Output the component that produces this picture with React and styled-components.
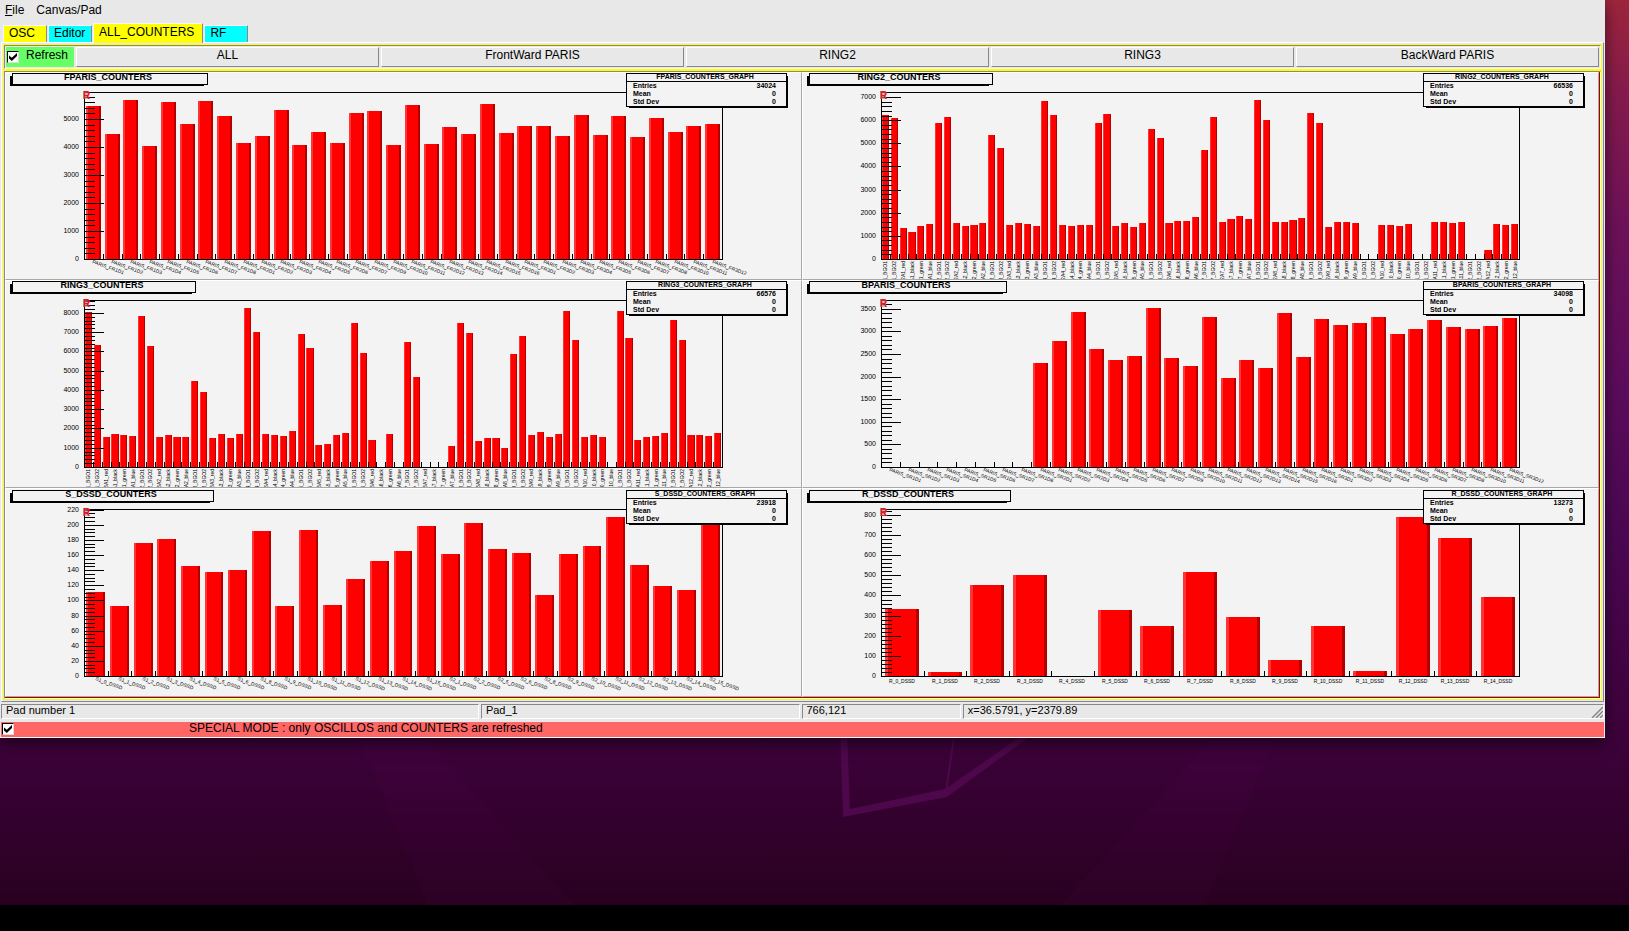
import * as React from "react";
import styled, { createGlobalStyle } from "styled-components";

const GlobalStyles = createGlobalStyle`
  * {
    box-sizing: border-box;
  }
  body {
    margin: 0;
    background: #000;
    font-family: "Liberation Sans", Arial, sans-serif;
    font-size: 12px;
    line-height: 14px;
    color: #000;
  }
`;

const Desktop = styled.div`
  position: relative;
  min-height: 100vh;
  padding-right: 24px;
  overflow: hidden;
`;

const WallpaperSvg = styled.svg`
  position: absolute;
  top: 0;
  left: 0;
  width: 100%;
  height: calc(100% - 26px);
`;

const Window = styled.div`
  position: relative;
  background: #e8e8e8;
  border-bottom: 1px solid #f8f8f8;
  box-shadow: 0 5px 14px rgba(0, 0, 0, 0.55);
`;

const MenuBar = styled.nav`
  display: flex;
  gap: 12px;
  height: 22px;
  padding: 3px 5px 0;
`;

const MenuItem = styled.button`
  align-self: flex-start;
  padding: 0;
  border: 0;
  background: none;
  font: inherit;
  color: inherit;

  &::first-letter {
    text-decoration: ${(props) => (props.$hotkey ? "underline" : "none")};
  }
`;

const TabStrip = styled.div`
  display: flex;
  align-items: flex-end;
  gap: 1px;
  height: 20px;
  padding-left: 3px;
`;

const Tab = styled.button`
  position: relative;
  min-width: 44px;
  height: ${(props) => (props.$active ? 20 : 17)}px;
  margin-bottom: ${(props) => (props.$active ? -1 : 0)}px;
  padding: 0 ${(props) => (props.$active ? 8 : 2)}px 3px 5px;
  border: 1px solid #f8f8f8;
  border-right-color: #888;
  border-bottom: 0;
  background: ${(props) => props.$color};
  font: inherit;
  color: inherit;
  text-align: left;
`;

const TabFrame = styled.div`
  margin: 0 1px;
  padding: 1px;
  border: 1px solid #fff;
  border-right-color: #888;
  border-bottom-color: #888;
`;

const YellowFrame = styled.div`
  display: flex;
  flex-direction: column;
  gap: 2px;
  padding: 1px;
  background: #ff0;
`;

const Sunken = styled.div`
  border: 1px solid #888;
  border-right-color: #fff;
  border-bottom-color: #fff;
  background: #e8e8e8;
`;

const Toolbar = styled(Sunken)`
  display: flex;
  gap: 2px;
  padding: 1px;
`;

const RefreshLabel = styled.label`
  display: flex;
  gap: 7px;
  width: 68px;
  height: 20px;
  padding: 0 1px;
  background: #6f6;
  line-height: 16px;
`;

const CheckBox = styled.input`
  appearance: none;
  flex: none;
  width: 12px;
  height: 12px;
  margin: ${(props) => props.$top}px 0 0;
  border: 1px solid #888;
  border-top-color: #000;
  border-left-color: #000;
  border-right-color: #ddd;
  border-bottom-color: #ddd;
  background: #fff;

  &:checked::before {
    content: "";
    display: block;
    width: 8px;
    height: 8px;
    margin: 1px;
    background: #000;
    clip-path: polygon(0 30%, 35% 60%, 100% 0, 100% 38%, 35% 100%, 0 70%);
  }
`;

const ToolButton = styled.button`
  flex: 1;
  height: 20px;
  padding: 0 0 4px;
  border: 1px solid #fff;
  border-right-color: #888;
  border-bottom-color: #888;
  background: #e8e8e8;
  font: inherit;
  color: inherit;
`;

const PadGrid = styled.div`
  display: grid;
  grid-template-columns: 1fr 1fr;
  border: 0 solid #a00;
  border-width: 0 1px 1px 0;
  background: #f3f3f3;
`;

const Pad = styled.section`
  min-width: 0;
  border: 1px solid #fff;
  border-right-color: #a8a8a8;
  border-bottom-color: #a8a8a8;

  &:nth-child(n + 5) {
    padding-top: 1px;
  }
`;

const Plot = styled.svg`
  display: block;
  width: 100%;
  height: auto;
`;

const PlotTitle = styled.text`
  font-size: 9px;
  font-weight: bold;
  text-anchor: middle;
`;

const StatText = styled.text`
  font-size: 7px;
  font-weight: bold;
  text-anchor: ${(props) => props.$anchor || "start"};
`;

const AxisText = styled.text`
  font-size: 7px;
  text-anchor: end;
`;

const BinText = styled.text`
  font-size: 5px;
  text-anchor: ${(props) => props.$anchor};
`;

const RangeMark = styled.text`
  font-size: 10px;
  font-weight: bold;
  fill: #f01020;
`;

const StatusBar = styled.footer`
  display: grid;
  grid-template-columns: 120fr 80fr 40fr 161fr;
  gap: 2px;
  padding: 2px 1px 3px;
`;

const StatusCell = styled(Sunken)`
  display: flex;
  justify-content: space-between;
  height: 15px;
  padding-left: 4px;
  font-size: 11px;
  line-height: 11px;
`;

const ModeLabel = styled.label`
  display: flex;
  gap: 175px;
  height: 15px;
  margin: 0 1px;
  padding-left: 1px;
  background: #f66;
  line-height: 12px;
`;

const LEFT = 78;
const RIGHT = 716;
const TOP = 19;
const BASE = 186;

const range = (from, to) =>
  Array.from({ length: to - from + 1 }, (_, i) => from + i);

const parisBins = (side) => [
  ...range(1, 8).map((d) => `PARIS_${side}R1D${d}`),
  ...[...range(1, 7), ...range(9, 16)].map((d) => `PARIS_${side}R2D${d}`),
  ...[...range(1, 8), ...range(10, 12)].map((d) => `PARIS_${side}R3D${d}`),
];

const ringBins = (ring) =>
  range(1, 12).flatMap((a) =>
    ["BGO1", "BGO2", "red", "black", "green", "blue"].map(
      (part) => `R${ring}A${a}_${part}`
    )
  );

const plots = [
  {
    name: "FPARIS_COUNTERS",
    entries: 34024,
    titleRight: 202,
    scale: 0.028,
    major: 1000,
    minor: 200,
    labels: "slanted",
    bins: parisBins("F"),
    values: [
      5460, 4460, 5680, 4040, 5610, 4820, 5640, 5110, 4140, 4390, 5320, 4070,
      4540, 4140, 5210, 5290, 4070, 5500, 4110, 4710, 4460, 5540, 4500, 4750,
      4750, 4390, 5140, 4430, 5110, 4360, 5040, 4540, 4750, 4820,
    ],
  },
  {
    name: "RING2_COUNTERS",
    entries: 66536,
    titleRight: 190,
    scale: 0.02314,
    major: 1000,
    minor: 200,
    labels: "vertical",
    bins: ringBins(2),
    values: [
      6210, 6100, 1340, 1170, 1430, 1510, 5880, 6140, 1560, 1430, 1470, 1560,
      5360, 4800, 1470, 1560, 1510, 1430, 6830, 6230, 1470, 1430, 1470, 1470,
      5880, 6270, 1430, 1560, 1380, 1560, 5620, 5230, 1560, 1640, 1640, 1820,
      4710, 6140, 1600, 1730, 1860, 1730, 6870, 6010, 1600, 1600, 1690, 1770,
      6310, 5880, 1380, 1600, 1600, 1560, 0, 0, 1470, 1470, 1430, 1510, 0, 0,
      1600, 1600, 1560, 1600, 0, 0, 390, 1510, 1470, 1510,
    ],
  },
  {
    name: "RING3_COUNTERS",
    entries: 66576,
    titleRight: 190,
    scale: 0.01927,
    major: 1000,
    minor: 200,
    labels: "vertical",
    bins: ringBins(3),
    values: [
      8060, 6350, 1570, 1730, 1680, 1630, 7850, 6300, 1570, 1680, 1570, 1570,
      4480, 3910, 1520, 1730, 1520, 1730, 8270, 7020, 1730, 1680, 1630, 1890,
      6920, 6190, 1160, 1210, 1680, 1780, 7490, 5930, 1420, 0, 1730, 0, 6500,
      4690, 0, 0, 0, 1110, 7490, 6970, 1370, 1520, 1520, 1000, 5880, 6820,
      1680, 1830, 1570, 1730, 8110, 6610, 1570, 1680, 1570, 0, 8110, 6710,
      1420, 1570, 1630, 1780, 7650, 6610, 1680, 1680, 1630, 1780,
    ],
  },
  {
    name: "BPARIS_COUNTERS",
    entries: 34098,
    titleRight: 204,
    scale: 0.0452,
    major: 500,
    minor: 100,
    labels: "slanted",
    bins: parisBins("S"),
    values: [
      0, 0, 0, 0, 0, 0, 0, 0, 2310, 2795, 3435, 2620, 2375, 2465, 3525, 2420,
      2240, 3325, 1975, 2375, 2200, 3415, 2440, 3280, 3150, 3190, 3325, 2950,
      3060, 3260, 3105, 3060, 3125, 3305,
    ],
  },
  {
    name: "S_DSSD_COUNTERS",
    entries: 23918,
    titleRight: 208,
    scale: 0.756,
    major: 20,
    minor: 5,
    labels: "slanted",
    bins: [
      ...[...range(0, 6), ...range(8, 15)].map((d) => `S1_${d}_DSSD`),
      ...[1, 2, 5, 6, ...range(8, 15)].map((d) => `S2_${d}_DSSD`),
    ],
    values: [
      111, 93, 176, 181, 146, 138, 140, 192, 92, 193, 94, 128, 152, 166, 199,
      162, 203, 168, 163, 107, 162, 172, 210, 147, 119, 114, 205,
    ],
  },
  {
    name: "R_DSSD_COUNTERS",
    entries: 13273,
    titleRight: 208,
    scale: 0.2013,
    major: 100,
    minor: 20,
    labels: "flat",
    bins: range(0, 14).map((d) => `R_${d}_DSSD`),
    values: [
      334, 21, 453, 503, 0, 329, 250, 518, 295, 81, 250, 26, 791, 687, 394,
    ],
  },
];

function BinLabel({ kind, x, children }) {
  if (kind === "vertical") {
    return (
      <BinText $anchor="end" transform={`translate(${x + 2} 188) rotate(-90)`}>
        {children}
      </BinText>
    );
  }
  if (kind === "slanted") {
    return (
      <BinText $anchor="start" transform={`translate(${x - 1} 190) rotate(20)`}>
        {children}
      </BinText>
    );
  }
  return (
    <BinText $anchor="middle" x={x} y={193}>
      {children}
    </BinText>
  );
}

function Histogram({ plot }) {
  const { name, values, bins, scale, major, minor } = plot;
  const step = (RIGHT - LEFT) / values.length;
  const ticks = range(0, Math.floor((BASE - TOP) / scale / minor)).map(
    (i) => i * minor
  );

  return (
    <Plot viewBox="0 0 795 206" role="img" aria-label={name}>
      <path
        d={`M${LEFT + 0.5} ${BASE + 0.5}V${TOP + 0.5}H${RIGHT + 0.5}V${BASE + 0.5}`}
        fill="none"
        stroke="#000"
      />
      <g shapeRendering="crispEdges">
        {values.map((value, i) => {
          if (!value) return null;
          const x = Math.round(LEFT + step * (i + 0.1));
          const width = Math.round(LEFT + step * (i + 0.9)) - x;
          const height = Math.round(value * scale);
          const bevel = Math.max(1, Math.round(width * 0.1));
          return (
            <g key={i}>
              <rect x={x} y={BASE - height} width={width} height={height} fill="#f00" />
              <rect x={x} y={BASE - height} width={bevel} height={height} fill="#ff3434" />
              <rect x={x + width - bevel} y={BASE - height} width={bevel} height={height} fill="#b20000" />
            </g>
          );
        })}
        {ticks.map((tick) => (
          <rect
            key={tick}
            x={LEFT}
            y={BASE - Math.round(tick * scale)}
            width={tick % major ? 11 : 20}
            height={1}
          />
        ))}
        {range(1, values.length - 1).map((i) => (
          <rect key={i} x={Math.round(LEFT + step * i)} y={BASE - 5} width={1} height={5} />
        ))}
        <rect x={LEFT} y={BASE} width={RIGHT - LEFT + 1} height={1} />
      </g>
      {ticks
        .filter((tick) => tick % major === 0)
        .map((tick) => (
          <AxisText key={tick} x={73} y={BASE - Math.round(tick * scale) + 2}>
            {tick}
          </AxisText>
        ))}
      {bins.map((bin, i) => (
        <BinLabel key={bin} kind={plot.labels} x={Math.round(LEFT + step * (i + 0.5))}>
          {bin}
        </BinLabel>
      ))}

      <rect x={77} y={18} width={6} height={8} fill="#999" opacity={0.6} />
      <RangeMark x={77} y={26}>
        R
      </RangeMark>

      <rect x={4} y={3} width={plot.titleRight - 8} height={10} />
      <rect x={6.5} y={0.5} width={plot.titleRight - 7} height={11} fill="#f3f3f3" stroke="#000" />
      <PlotTitle x={plot.titleRight / 2 + 1} y={7}>
        {name}
      </PlotTitle>

      <rect x={623} y={3} width={159} height={32} />
      <rect x={620.5} y={0.5} width={160} height={33} fill="#f3f3f3" stroke="#000" />
      <rect x={620} y={8} width={161} height={1} />
      <StatText $anchor="middle" x={699} y={6}>
        {name}_GRAPH
      </StatText>
      {[
        ["Entries", plot.entries],
        ["Mean", 0],
        ["Std Dev", 0],
      ].map(([label, value], i) => (
        <React.Fragment key={label}>
          <StatText x={627} y={15 + i * 8}>
            {label}
          </StatText>
          <StatText $anchor="end" x={770} y={15 + i * 8}>
            {value}
          </StatText>
        </React.Fragment>
      ))}
    </Plot>
  );
}

function Wallpaper() {
  return (
    <WallpaperSvg viewBox="0 0 1629 905" preserveAspectRatio="none" aria-hidden="true">
      <defs>
        <linearGradient id="dusk" x1="0" y1="0" x2="0" y2="1">
          <stop offset="0" stopColor="#9c253c" />
          <stop offset="0.1" stopColor="#851b4c" />
          <stop offset="0.25" stopColor="#6d1159" />
          <stop offset="0.42" stopColor="#5c0c5c" />
          <stop offset="0.6" stopColor="#4a0752" />
          <stop offset="0.82" stopColor="#3c023a" />
          <stop offset="1" stopColor="#290020" />
        </linearGradient>
      </defs>
      <rect width="1629" height="905" fill="url(#dusk)" />
      <path d="M355 730H419L575 905H428Z" fill="#7a107a" opacity="0.05" />
      <path d="M1220 730H1279L1205 905H1060Z" fill="#7a107a" opacity="0.05" />
      <path
        d="M840 730L843 817L947 797L1039 730H1030L945 789L850 809L847 730Z"
        fill="#4d084b"
      />
      <path d="M955 730L946 792" stroke="#4d084b" strokeWidth="2" />
    </WallpaperSvg>
  );
}

const canvases = ["ALL", "FrontWard PARIS", "RING2", "RING3", "BackWard PARIS"];

function App() {
  return (
    <Desktop>
      <GlobalStyles />
      <Wallpaper />
      <Window>
        <MenuBar>
          <MenuItem $hotkey>File</MenuItem>
          <MenuItem>Canvas/Pad</MenuItem>
        </MenuBar>

        <TabStrip role="tablist">
          <Tab role="tab" $color="#ff0">OSC</Tab>
          <Tab role="tab" $color="#0ff">Editor</Tab>
          <Tab role="tab" $color="#ff0" $active aria-selected="true">
            ALL_COUNTERS
          </Tab>
          <Tab role="tab" $color="#0ff">RF</Tab>
        </TabStrip>

        <TabFrame>
          <YellowFrame>
            <Toolbar>
              <RefreshLabel>
                <CheckBox type="checkbox" defaultChecked $top={4} />
                Refresh
              </RefreshLabel>
              {canvases.map((canvas) => (
                <ToolButton key={canvas}>{canvas}</ToolButton>
              ))}
            </Toolbar>
            <Sunken>
              <PadGrid>
                {plots.map((plot) => (
                  <Pad key={plot.name}>
                    <Histogram plot={plot} />
                  </Pad>
                ))}
              </PadGrid>
            </Sunken>
          </YellowFrame>
        </TabFrame>

        <StatusBar>
          <StatusCell>Pad number 1</StatusCell>
          <StatusCell>Pad_1</StatusCell>
          <StatusCell>766,121</StatusCell>
          <StatusCell>
            x=36.5791, y=2379.89
            <svg width="12" height="13" viewBox="0 0 12 13" aria-hidden="true">
              <path d="M1 13L12 2M5 13L12 6M9 13L12 10" stroke="#888" strokeWidth="1.5" />
            </svg>
          </StatusCell>
        </StatusBar>

        <ModeLabel>
          <CheckBox type="checkbox" defaultChecked $top={1} />
          SPECIAL MODE : only OSCILLOS and COUNTERS are refreshed
        </ModeLabel>
      </Window>
    </Desktop>
  );
}

export default App;
